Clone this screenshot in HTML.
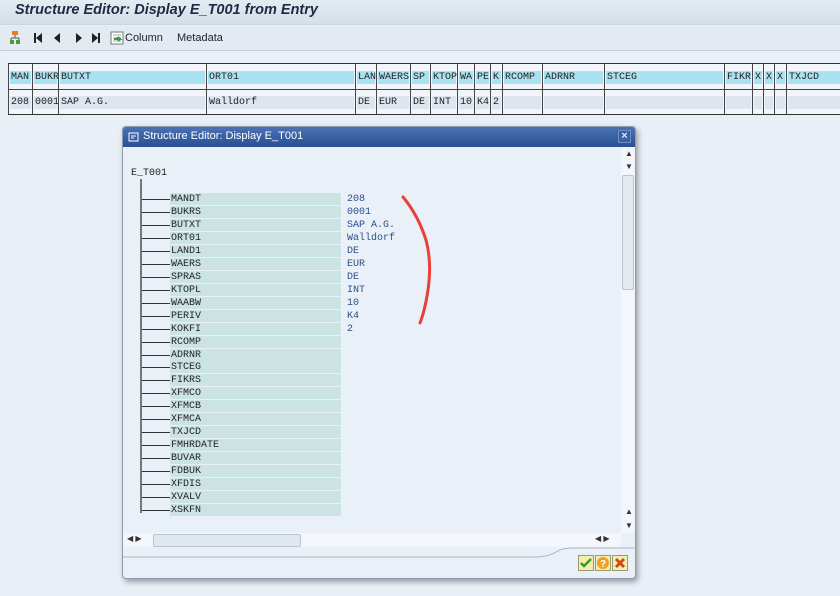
<!DOCTYPE html>
<html><head><style>
*{margin:0;padding:0;box-sizing:border-box}
body{width:840px;height:596px;overflow:hidden;background:#e9eff6;font-family:"Liberation Sans",sans-serif;position:relative}
.a{position:absolute}
.mono{font-family:"Liberation Mono",monospace;font-size:10px;color:#222}
.tb{left:8px;top:63px;height:52px;width:840px;border-top:1px solid #333;border-bottom:1px solid #333;background:#f2f5f9}
.c{position:absolute;top:0;height:50px;border-left:1px solid #444}
.c .h{position:absolute;left:1px;right:1px;top:7px;height:13px;background:#a9e3f3;padding-left:1px;line-height:13px}
.c .d{position:absolute;left:1px;right:1px;top:32px;height:13px;background:#dde5ef;padding-left:1px;line-height:13px}
.hl{position:absolute;left:0;right:0;top:25px;border-top:1px solid #444}
</style></head><body>
<div class="a" style="left:0;top:0;width:840px;height:25px;background:linear-gradient(#e4ebf2,#d5dfea);border-bottom:1px solid #c9d4df"></div>
<div class="a" style="left:15px;top:2px;font-size:14.5px;font-weight:bold;font-style:italic;color:#1d2a44">Structure Editor: Display E_T001 from Entry</div>
<div class="a" style="left:0;top:26px;width:840px;height:25px;background:#e3eaf2;border-bottom:1px solid #c3ced9"></div>
<svg class="a" style="left:10px;top:30px" width="215" height="16">
<rect x="2" y="1" width="6" height="4" fill="#e67c2a"/><path d="M5 5v3M1 8h8M1 8v2M9 8v2" stroke="#555" fill="none"/><rect x="0" y="10" width="4" height="4" fill="#4a9a3a"/><rect x="6" y="10" width="4" height="4" fill="#4a9a3a"/>
<path d="M25 3v10" stroke="#222" stroke-width="2"/><path d="M32 3l-6 5 6 5z" fill="#222"/>
<path d="M50 3l-6 5 6 5z" fill="#222"/>
<path d="M66 3l6 5-6 5z" fill="#222"/>
<path d="M82 3l6 5-6 5z" fill="#222"/><path d="M89 3v10" stroke="#222" stroke-width="2"/>
<rect x="101" y="2" width="12" height="12" fill="#fff" stroke="#777"/><path d="M103 5h8M103 8h8M103 11h8" stroke="#aaa"/><path d="M104 9h6l-2-2M110 9l-2 2" stroke="#3a9a3a" stroke-width="2"/>
</svg>
<div class="a" style="left:125px;top:32px;font-size:11px;color:#223">Column</div>
<div class="a" style="left:177px;top:32px;font-size:11px;color:#223">Metadata</div>

<div class="a tb mono">
<div class="hl"></div>
<div class="c" style="left:0;width:24px"><div class="h">MAN</div><div class="d">208</div></div>
<div class="c" style="left:24px;width:26px"><div class="h">BUKR</div><div class="d">0001</div></div>
<div class="c" style="left:50px;width:148px"><div class="h">BUTXT</div><div class="d">SAP A.G.</div></div>
<div class="c" style="left:198px;width:149px"><div class="h">ORT01</div><div class="d">Walldorf</div></div>
<div class="c" style="left:347px;width:21px"><div class="h">LAN</div><div class="d">DE</div></div>
<div class="c" style="left:368px;width:34px"><div class="h">WAERS</div><div class="d">EUR</div></div>
<div class="c" style="left:402px;width:20px"><div class="h">SP</div><div class="d">DE</div></div>
<div class="c" style="left:422px;width:27px"><div class="h">KTOP</div><div class="d">INT</div></div>
<div class="c" style="left:449px;width:17px"><div class="h">WA</div><div class="d">10</div></div>
<div class="c" style="left:466px;width:16px"><div class="h">PE</div><div class="d">K4</div></div>
<div class="c" style="left:482px;width:12px"><div class="h">K</div><div class="d">2</div></div>
<div class="c" style="left:494px;width:40px"><div class="h">RCOMP</div><div class="d"></div></div>
<div class="c" style="left:534px;width:62px"><div class="h">ADRNR</div><div class="d"></div></div>
<div class="c" style="left:596px;width:120px"><div class="h">STCEG</div><div class="d"></div></div>
<div class="c" style="left:716px;width:28px"><div class="h">FIKR</div><div class="d"></div></div>
<div class="c" style="left:744px;width:11px"><div class="h">X</div><div class="d"></div></div>
<div class="c" style="left:755px;width:11px"><div class="h">X</div><div class="d"></div></div>
<div class="c" style="left:766px;width:12px"><div class="h">X</div><div class="d"></div></div>
<div class="c" style="left:778px;width:70px"><div class="h">TXJCD</div><div class="d"></div></div>
</div>

<div class="a" style="left:122px;top:126px;width:514px;height:453px;background:#e9f0f7;border:1px solid #8a9bb3;border-radius:4px;box-shadow:2px 3px 6px rgba(0,0,0,.35);overflow:hidden">
<div class="a" style="left:0;top:0;width:512px;height:20px;background:linear-gradient(#4a72b4,#2a4f94)"></div>
<svg class="a" style="left:5px;top:4px" width="12" height="12"><rect x="1" y="2" width="9" height="8" fill="none" stroke="#fff"/><path d="M3 5h5M3 7h3" stroke="#fff"/></svg>
<div class="a" style="left:20px;top:3px;font-size:11px;color:#fff">Structure Editor: Display E_T001</div>
<div class="a" style="left:495px;top:3px;width:13px;height:13px;background:#3a5fa5;border:1px solid #6f8cc4;color:#dfe8f7;font-size:11px;line-height:11px;text-align:center;font-weight:bold">×</div>
<div class="a" style="left:498px;top:20px;width:14px;height:386px;background:#f3f6fa"></div>
<div class="a" style="left:499px;top:48px;width:12px;height:115px;background:#e3eaf2;border:1px solid #b9c4d0;border-radius:2px"></div>
<div class="a" style="left:502px;top:22px;font-size:8px;color:#333">▲</div>
<div class="a" style="left:502px;top:35px;font-size:8px;color:#333">▼</div>
<div class="a" style="left:502px;top:380px;font-size:8px;color:#333">▲</div>
<div class="a" style="left:502px;top:394px;font-size:8px;color:#333">▼</div>
<div class="a" style="left:0;top:406px;width:498px;height:14px;background:#f3f6fa"></div>
<div class="a" style="left:30px;top:407px;width:148px;height:13px;background:#dfe7f0;border:1px solid #b9c4d0;border-radius:2px"></div>
<div class="a" style="left:4px;top:407px;font-size:8px;color:#333">◀ ▶</div>
<div class="a" style="left:472px;top:407px;font-size:8px;color:#333">◀ ▶</div>
<svg class="a" style="left:0;top:420px" width="512" height="14"><path d="M0 10H415Q425 10 435 4Q440 1 450 1H512" stroke="#aab5c2" fill="none"/></svg>
<svg class="a" style="left:455px;top:428px" width="52" height="18">
<rect x="0.5" y="0.5" width="15" height="15" fill="#f1efb0" stroke="#9a9a70"/><path d="M3 8l3 3 7-7" stroke="#3a9a2a" stroke-width="2.5" fill="none"/>
<rect x="17.5" y="0.5" width="15" height="15" fill="#f1efb0" stroke="#9a9a70"/><circle cx="25" cy="8" r="6" fill="#f0a020"/><text x="22" y="12" font-size="10" font-weight="bold" fill="#fff" font-family="Liberation Sans">?</text>
<rect x="34.5" y="0.5" width="15" height="15" fill="#f1efb0" stroke="#9a9a70"/><path d="M38 4l8 8M46 4l-8 8" stroke="#d04a1a" stroke-width="3"/>
</svg>
</div>

<div class="a mono" style="left:131px;top:168px">E_T001</div>
<div class="a" style="left:140px;top:179px;width:2px;height:334px;background:#777"></div>
<div id="rows"></div>
<script>
var f=["MANDT","BUKRS","BUTXT","ORT01","LAND1","WAERS","SPRAS","KTOPL","WAABW","PERIV","KOKFI","RCOMP","ADRNR","STCEG","FIKRS","XFMCO","XFMCB","XFMCA","TXJCD","FMHRDATE","BUVAR","FDBUK","XFDIS","XVALV","XSKFN"];
var v=["208","0001","SAP A.G.","Walldorf","DE","EUR","DE","INT","10","K4","2"];
var h="";
for(var i=0;i<f.length;i++){var y=193+i*12.96;
h+='<div class="a" style="left:142px;top:'+(y+6)+'px;width:29px;height:1px;background:#333"></div>';
h+='<div class="a mono" style="left:170px;top:'+y+'px;width:171px;height:12px;background:#cce3e4;line-height:13px;padding-left:1px">'+f[i]+'</div>';
if(v[i])h+='<div class="a mono" style="left:347px;top:'+y+'px;line-height:13px;color:#2b4f8c">'+v[i]+'</div>';}
document.getElementById("rows").innerHTML=h;
</script>
<svg class="a" style="left:0;top:0" width="840" height="596"><path d="M403 197Q418 215 426 240Q432 262 428 290Q425 310 420 323" stroke="#e8413a" stroke-width="3" fill="none" stroke-linecap="round"/></svg>
</body></html>
